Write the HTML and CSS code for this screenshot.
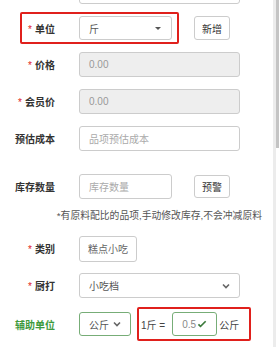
FILE: index.html
```html
<!DOCTYPE html>
<html lang="zh-CN">
<head>
    <meta charset="UTF-8">
    <meta name="viewport" content="width=device-width, initial-scale=1.0">
    <title>品项编辑</title>
    <link rel="stylesheet" href="styles.css">
</head>
<body>
    <div class="screen">
        <div class="form">
            <div class="row row-cut">
                <span class="label"></span>
                <div class="input wide"></div>
            </div>

            <div class="row row-unit">
                <div class="mark-box unit-box">
                    <span class="label"><i>*</i>单位</span>
                    <div class="input select narrow">斤<span class="caret"></span></div>
                </div>
                <button class="btn btn-add">新增</button>
            </div>

            <div class="row row-price">
                <span class="label"><i>*</i>价格</span>
                <div class="input wide disabled">0.00</div>
            </div>

            <div class="row row-member">
                <span class="label"><i>*</i>会员价</span>
                <div class="input wide disabled">0.00</div>
            </div>

            <div class="row row-cost">
                <span class="label">预估成本</span>
                <div class="input wide placeholder">品项预估成本</div>
            </div>

            <div class="row row-stock">
                <span class="label">库存数量</span>
                <div class="input narrow placeholder">库存数量</div>
                <button class="btn btn-warn">预警</button>
            </div>

            <p class="note">*有原料配比的品项,手动修改库存,不会冲减原料</p>

            <div class="row row-type">
                <span class="label"><i>*</i>类别</span>
                <div class="input tag">糕点小吃</div>
            </div>

            <div class="row row-print">
                <span class="label"><i>*</i>厨打</span>
                <div class="input select wide">小吃档
                    <svg class="chevron" viewBox="0 0 8 6"><polyline points="1,1.5 4,4.5 7,1.5"/></svg>
                </div>
            </div>

            <div class="row row-aux">
                <span class="label label-ok">辅助单位</span>
                <div class="input select small ok">公斤
                    <svg class="chevron" viewBox="0 0 8 6"><polyline points="1,1.5 4,4.5 7,1.5"/></svg>
                </div>
                <div class="mark-box ratio-box">
                    <span class="ratio-text">1斤 =</span>
                    <div class="input ratio ok">0.5<svg class="check" viewBox="0 0 12 10"><path d="M1 5.5 L4.2 8.6 L11 1.6 L9.6 0.4 L4.2 6 L2.4 4.2 Z"/></svg></div>
                    <span class="ratio-text">公斤</span>
                </div>
            </div>
        </div>

        <div class="scrollbar">
            <div class="track"></div>
            <div class="thumb"></div>
        </div>
    </div>
</body>
</html>
```

FILE: styles.css
```css
body {
    margin: 0;
    background-color: #fff;
    font-family: "Liberation Sans", "Noto Sans CJK SC", sans-serif;
    font-size: 10px;
    color: #333;
    overflow: hidden;
}

.screen {
    display: flex;
    width: 279px;
    height: 347px;
    overflow: hidden;
}

.form {
    flex: 1;
}

.row {
    display: flex;
    align-items: center;
    height: 25px;
}

.row-cut { margin-top: -21px; }
.row-unit { margin-top: 8px; height: 32px; }
.row-price { margin-top: 8px; }
.row-member { margin-top: 12px; }
.row-cost { margin-top: 12px; }
.row-stock { margin-top: 23px; }
.row-type { margin-top: 13px; }
.row-print { margin-top: 12px; }
.row-aux { margin-top: 9px; height: 34px; }

.label {
    width: 55px;
    flex-shrink: 0;
    text-align: right;
    font-weight: bold;
    color: #333;
    margin-right: 24px;
}

.label i {
    font-style: normal;
    font-weight: normal;
    color: #e0201c;
    margin-right: 3px;
}

.label-ok {
    color: #3d9a3d;
}

.input {
    box-sizing: border-box;
    height: 25px;
    border: 1px solid #ccc;
    border-radius: 3px;
    padding: 0 9px;
    display: flex;
    align-items: center;
    color: #555;
    background-color: #fff;
    position: relative;
}

.wide { width: 161px; }
.narrow { width: 93px; }
.small { width: 52px; }

.disabled {
    background-color: #eee;
    color: #999;
}

.placeholder {
    color: #aaa;
}

.tag {
    width: auto;
    padding: 0 8px;
    height: 26px;
    color: #666;
}

.select {
    justify-content: space-between;
}

.caret {
    width: 0;
    height: 0;
    border-left: 3px solid transparent;
    border-right: 3px solid transparent;
    border-top: 3px solid #555;
    margin-right: 1px;
}

.chevron {
    width: 8px;
    height: 6px;
    fill: none;
    stroke: #666;
    stroke-width: 1.6;
}

.ok {
    border-color: #77ad77;
}

.mark-box {
    display: flex;
    align-items: center;
    box-sizing: border-box;
    border: 2px solid #e0201c;
    border-radius: 2px;
}

.unit-box {
    margin-left: 20px;
    height: 32px;
    padding-right: 5px;
}

.unit-box .label {
    width: 33px;
}

.unit-box .input {
    height: 24px;
}

.btn {
    box-sizing: border-box;
    height: 24px;
    margin-left: 22px;
    padding: 0 7px;
    border: 1px solid #ccc;
    border-radius: 3px;
    background-color: #fff;
    font-family: inherit;
    font-size: 10px;
    color: #333;
}

.btn-add {
    margin-left: 15px;
}

.btn-warn {
    height: 23px;
}

.note {
    margin: 10px 0 0;
    height: 14px;
    line-height: 14px;
    font-size: 9.8px;
    color: #555;
    text-align: right;
    padding-right: 11px;
}

.row-aux .input {
    height: 24px;
}

.ratio-box {
    margin-left: 6px;
    height: 34px;
    padding: 0 10px 0 2px;
}

.ratio-text {
    color: #444;
}

.ratio {
    width: 45px;
    margin: 0 2px 0 7px;
    justify-content: flex-start;
    color: #888;
}

.check {
    width: 11px;
    height: 9px;
    fill: #3b7a3b;
    margin-left: 1px;
}

.scrollbar {
    display: flex;
    width: 6px;
    flex-shrink: 0;
}

.track {
    width: 3px;
    background-color: #ececec;
}

.thumb {
    width: 3px;
    height: 148px;
    background-color: #c4c4c4;
}
```
